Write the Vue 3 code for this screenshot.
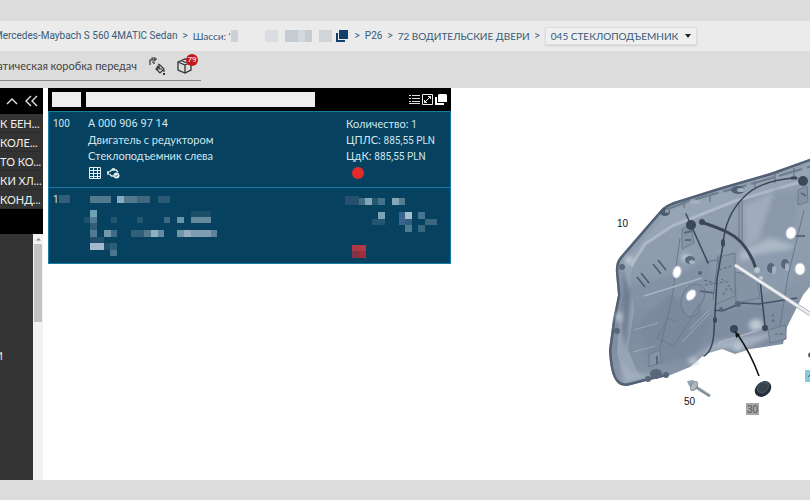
<script setup>
import { ref } from 'vue'

const groups = ['К БЕН...', 'КОЛЕ...', 'ТО КО...', 'КИ ХЛ...', 'КОНД...']
const group = ref('045')
const position = ref('')
const query = ref('')

// Masked values: [x, y, width, height, colour]
const chassisMask = [
  [0, 0, 7, 12, '#cdd1d6'], [34, 0, 13, 12, '#dcdde2'], [54, 0, 13, 12, '#c3cbd3'],
  [67, 0, 7, 12, '#d3d8dc'], [74, 0, 7, 12, '#c5cdd4'], [88, 0, 13, 12, '#d0d5d9']
]
const nameMask = [
  [6, 0, 21, 7, '#527a8f'], [33, 0, 7, 7, '#86adbd'], [40, 0, 13, 7, '#54798d'],
  [53, 0, 13, 7, '#3e687e'], [74, 0, 12, 7, '#2b5a74'],
  [6, 14, 7, 7, '#6ea1b1'], [6, 21, 7, 6, '#507b92'], [0, 21, 6, 6, '#1e506b'],
  [27, 21, 6, 6, '#25566f'], [53, 21, 6, 6, '#25566f'], [80, 21, 6, 6, '#3d6a82'],
  [93, 21, 7, 6, '#6b94a4'], [107, 21, 20, 6, '#648a9c'], [107, 15, 20, 6, '#1c4e69'],
  [6, 27, 7, 7, '#315f7a'], [6, 34, 7, 7, '#527b92'], [20, 34, 7, 7, '#7298aa'],
  [27, 34, 6, 7, '#3d6c84'], [47, 34, 13, 7, '#315f79'], [60, 34, 7, 7, '#52798e'],
  [67, 34, 7, 7, '#93b0bf'], [74, 34, 6, 7, '#638a9f'], [93, 34, 7, 7, '#7294a8'],
  [100, 34, 7, 7, '#94adc0'], [107, 34, 20, 7, '#7e9db2'], [127, 34, 6, 7, '#5e849a'],
  [6, 41, 14, 6, '#204f6e'], [6, 47, 14, 7, '#a3bacd'], [20, 47, 6, 7, '#1e506b'],
  [26, 47, 7, 7, '#2d5e77'], [26, 54, 7, 6, '#4b758a']
]
const priceMask = [
  [0, 0, 14, 9, '#244f6d'], [14, 2, 6, 7, '#416d83'], [20, 2, 7, 7, '#84a7b8'],
  [27, 2, 6, 7, '#25566f'], [33, 2, 7, 7, '#44728a'], [47, 2, 7, 7, '#84a7b8'],
  [54, 2, 6, 7, '#547c91'], [33, 16, 7, 7, '#7ba3b2'], [27, 23, 13, 6, '#235570'],
  [54, 16, 6, 13, '#386590'], [60, 16, 7, 7, '#a7bdcd'], [73, 16, 7, 7, '#46738d'],
  [80, 23, 12, 6, '#38677f'], [60, 23, 7, 6, '#315f7b'], [60, 29, 7, 7, '#4b7b90'],
  [73, 29, 7, 7, '#37667f'], [7, 49, 14, 6, '#ae3945'], [7, 55, 7, 7, '#803347'],
  [14, 55, 7, 7, '#a12d3b']
]
</script>

<template>
  <div class="page">
    <nav class="crumbs" aria-label="Навигация">
      <a href="#" class="model">Mercedes-Maybach S 560 4MATIC Sedan</a>
      <span class="sep">&gt;</span>
      <a href="#">Шасси: '</a>
      <svg class="chassis" width="101" height="12" aria-hidden="true">
        <rect v-for="(m, i) in chassisMask" :key="i" :x="m[0]" :y="m[1]" :width="m[2]" :height="m[3]" :fill="m[4]" />
      </svg>
      <button class="icon copy" type="button" aria-label="Копировать">
        <svg width="12" height="12" viewBox="0 0 12 12"><path d="M3 0h9v9H3z" fill="#123f6b" /><path d="M0 3h2v7h7v2H0z" fill="#123f6b" /></svg>
      </button>
      <span class="sep">&gt;</span>
      <a href="#" class="code">P26</a>
      <span class="sep">&gt;</span>
      <a href="#" class="section">72 ВОДИТЕЛЬСКИЕ ДВЕРИ</a>
      <span class="sep">&gt;</span>
      <label class="picker">
        <select v-model="group" aria-label="Подгруппа">
          <option value="045">045 СТЕКЛОПОДЪЕМНИК</option>
        </select>
        <svg width="6" height="4" viewBox="0 0 6 4" aria-hidden="true"><path d="M0 0h6L3 4z" fill="#222" /></svg>
      </label>
    </nav>

    <div class="toolbar">
      <div class="tools">
        <span class="gearbox">матическая коробка передач</span>
        <button class="icon" type="button" aria-label="Масла и краски">
          <svg width="18" height="18" viewBox="0 0 18 18" fill="none" stroke="#333" stroke-width="1.2">
            <path d="M2 8V3h5M4 3V1h3v3M7 2h2M4 5h2v2" />
            <path d="M8 12l4-4 4 4-4 4zM9 9l3 2M8 12h6M12 8l-2-1M16 13v2" /><path d="M15 17h2" stroke-width="2" />
          </svg>
        </button>
        <button class="icon cart" type="button" aria-label="Корзина">
          <svg width="16" height="17" viewBox="0 0 16 17" fill="none" stroke="#333" stroke-width="1.3">
            <path d="M1 5l7-3 6 3v8l-6 3-7-3zM1 5l7 3 6-3M8 8v8M4 3.500l7 3" />
          </svg>
          <span class="badge">79</span>
        </button>
      </div>
    </div>

    <main class="body">
      <aside class="side">
        <div class="side-head">
          <button class="icon" type="button" aria-label="Свернуть">
            <svg width="12" height="8" viewBox="0 0 12 8" fill="none" stroke="#e4e4e4" stroke-width="1.400"><path d="M1 7l5-5 5 5" /></svg>
          </button>
          <button class="icon" type="button" aria-label="Скрыть панель">
            <svg width="13" height="12" viewBox="0 0 13 12" fill="none" stroke="#e4e4e4" stroke-width="1.400"><path d="M6 1L1 6l5 5M12 1L7 6l5 5" /></svg>
          </button>
        </div>
        <ul class="groups">
          <li v-for="g in groups" :key="g"><a href="#">{{ g }}</a></li>
        </ul>
        <div class="side-gap"></div>
        <div class="tree">
          <div class="tree-list">
            <span v-for="n in 9" :key="n" class="tree-row">{{ n === 5 ? 'И' : '' }}</span>
          </div>
          <div class="scroll" aria-hidden="true">
            <svg width="9" height="10" viewBox="0 0 9 10"><path d="M2 6.500L4.500 4 7 6.500z" fill="#888" /></svg>
            <div class="thumb"></div>
          </div>
        </div>
      </aside>

      <section class="parts">
        <div class="parts-head">
          <input v-model="position" class="find-pos" type="text" aria-label="Позиция" />
          <input v-model="query" class="find-name" type="text" aria-label="Поиск детали" />
          <div class="actions">
            <button class="icon" type="button" aria-label="Список">
              <svg width="11" height="11" viewBox="0 0 11 11" stroke="#ddd"><path d="M0 1.500h2M3 1.500h8M0 4.500h2M3 4.500h8M0 7.500h2M3 7.500h8M0 9.500h11" /></svg>
            </button>
            <button class="icon" type="button" aria-label="Развернуть">
              <svg width="11" height="11" viewBox="0 0 11 11" fill="none" stroke="#eee"><path d="M.5.5h10v10H.5zM2.500 8.500l6-6M6 2.500h2.500V5M2.500 6v2.500H5" /></svg>
            </button>
            <button class="icon" type="button" aria-label="Копировать список">
              <svg width="12" height="11" viewBox="0 0 12 11" fill="#fff"><path d="M4 0h7l1 1v7H3V1z" /><path d="M0 3h2v6h7v2H0z" /></svg>
            </button>
          </div>
        </div>

        <article class="part">
          <span class="pos">100</span>
          <div class="info">
            <span class="num">A 000 906 97 14</span>
            <span>Двигатель с редуктором</span>
            <span>Стеклоподъемник слева</span>
            <div class="part-icons">
              <button class="icon" type="button" aria-label="Таблица">
                <svg width="12" height="12" viewBox="0 0 12 12" fill="none" stroke="#e4f0f5"><path d="M.5.5h11v11H.5zM.5 3.500h11M.5 6.500h11M.5 9.500h11M4.500 0v12M8.500 0v12" /></svg>
              </button>
              <button class="icon" type="button" aria-label="Двигатель">
                <svg width="13" height="11" viewBox="0 0 13 11" fill="none" stroke="#e4f0f5"><path d="M0 4.500h2M1 3v4M2.500 6l2 2H8M2.500 4l2-2H9l2 2M5 1h3" stroke-width="1.300" /><circle cx="9.500" cy="7.500" r="3" fill="#e4f0f5" stroke="none" /><path d="M8 7.500l1 1 2-2" stroke="#17587a" /></svg>
              </button>
            </div>
          </div>
          <div class="price">
            <span>Количество: <b>1</b></span>
            <span>ЦПЛС: <b>885,55 PLN</b></span>
            <span>ЦдК: <b>885,55 PLN</b></span>
            <i class="status"></i>
          </div>
        </article>

        <article class="part">
          <span class="pos">1<i class="pos-mask"></i></span>
          <div class="info masked">
            <svg width="133" height="60" aria-hidden="true">
              <rect v-for="(m, i) in nameMask" :key="i" :x="m[0]" :y="m[1]" :width="m[2]" :height="m[3]" :fill="m[4]" />
            </svg>
          </div>
          <div class="price masked">
            <svg width="92" height="62" aria-hidden="true">
              <rect v-for="(m, i) in priceMask" :key="i" :x="m[0]" :y="m[1]" :width="m[2]" :height="m[3]" :fill="m[4]" />
            </svg>
          </div>
        </article>
      </section>

      <section class="drawing">
        <svg width="210" height="392" viewBox="600 88 210 392" role="img" aria-label="Схема двери">
          <defs>
            <linearGradient id="panel" x1="0" y1="0" x2="0" y2="1">
              <stop offset="0" stop-color="#94a1b1" /><stop offset=".5" stop-color="#8d9bac" />
              <stop offset=".75" stop-color="#7e8c9f" /><stop offset="1" stop-color="#8896a8" />
            </linearGradient>
            <filter id="soft" x="-30%" y="-30%" width="160%" height="160%"><feGaussianBlur stdDeviation="2" /></filter>
            <clipPath id="door">
              <path d="M812 158L770 173 718 188 683 199Q664 204 659 212L645 228 620 257Q615 263 616 273L618 295 613 320 609 350Q610 373 616 381 621 388 631 385L650 380 668 376 690 367 705 354 722 349 735 354 750 349 783 344 787 327 796 309 803 295 812 284z" />
            </clipPath>
          </defs>
          <g clip-path="url(#door)">
            <path d="M600 150h212v240H600z" fill="url(#panel)" />
            <path d="M812 166L718 194 670 210 624 262 626 295 619 325 617 355 625 376 640 378 628 350 634 310 630 275 640 250 670 228 735 200 812 176z" fill="#97a4b4" />
            <path d="M631 266L645 244 672 226 735 201 800 182" fill="none" stroke="#adb9c6" stroke-width="3" />
            <g filter="url(#soft)">
              <path d="M744 207l40-20-20 47-18 14z" fill="#a0acbb" />
              <path d="M775 190l25 4-10 44-30-4z" fill="#8a98aa" />
              <path d="M740 252l30-14 26 8-16 7-40 8z" fill="#abb7c4" />
              <path d="M628 288l60-18 22-14 4 28-70 22z" fill="#8492a5" />
              <path d="M640 320l30-26 30 16 14 8-20 38-45 10z" fill="#7b899d" />
              <path d="M718 312l66-10-2 28-62 20z" fill="#808ea1" />
              <path d="M686 362l32-21 64-10-36 17-30 2z" fill="#a5b1bf" />
              <path d="M620 360l12 12 22 4-30 8z" fill="#a2afbd" />
              <path d="M752 255l40-6v36l-36 10z" fill="#8d9baf" />
              <path d="M623 270l8 25-5 55-4-20z" fill="#6e7c90" />
            </g>
            <path d="M812 158L770 173 718 188 683 199Q664 204 659 212L645 228 620 257Q615 263 616 273L618 295 613 320 609 350Q610 373 616 381 621 388 631 385L650 380 668 376" fill="none" stroke="#536176" stroke-width="5" />
            <path d="M684 200v8M710 196v6M755 181v8M775 174v9M794 168v10" stroke="#5b697d" />
            <path d="M668 209l18-7 24-7 45-12 57-17" fill="none" stroke="#6d7b8f" stroke-width="2" stroke-dasharray="24 5" />
            <ellipse cx="665" cy="212" rx="5" ry="4" fill="#4d5b70" /><ellipse cx="667" cy="211" rx="2" ry="2" fill="#909dad" />
            <ellipse cx="695" cy="202" rx="6" ry="2" fill="#a4b0bf" />
            <ellipse cx="738" cy="190" rx="7" ry="4" fill="#536177" /><ellipse cx="741" cy="190" rx="4" ry="2" fill="#a2afbe" />
          </g>

          <g fill="none" stroke="#69788c">
            <path d="M742 199v43M739 201v41M718 255l-5 45M706 262l16-3" />
            <path d="M680 238l-8 60-13 54M804 210l-16 66-8 50" />
            <path d="M682 297c2-10 13-16 20-11 6 4 2 14-3 22-2 9-9 12-14 5-4-5-5-10-3-16z" fill="#8290a3" />
            <path d="M668 318l-11 20 17 8 26-43M668 318l8 3" stroke="#6d7b90" />
            <path d="M714 310l8 1 20-8 17 1 38-6" stroke="#465469" stroke-width="1.500" />
            <path d="M700 291l14 2" stroke="#58677c" stroke-width="2" />
            <path d="M718 343l38-12M644 296l58-18" stroke="#a9b5c2" stroke-width="1.500" />
            <path d="M634 330l24-7M633 352l22-6M683 341l27-28M690 329l20-20" stroke="#9ca9b8" />
          </g>
          <g stroke="#4c596c" stroke-width="1.500">
            <path d="M637 277l8 10M641 273l8 10M653 264l8 10M658 260l8 10" />
          </g>
          <g fill="#8593a5" stroke="#6d7b8f">
            <path d="M719 257l16-4v43l-20 9z" />
            <path d="M735 272l22 4 3 22-24 5z" />
            <path d="M682 229l9-4 3 18-12 6z" /><path d="M798 190l9-4 1 16-10 3z" />
            <path d="M649 354l11-4 1 12-12 5z" />
            <path d="M768 330l18-5v14l-16 4z" />
          </g>
          <g fill="none" stroke="#5a687c">
            <path d="M719 270l12-4M705 285l20-3M723 295l6-10 4 8M721 279l8 4M772 321h4M773 314v9M775 334h8M704 280l14 4" stroke-dasharray="3 2" />
            <path d="M684 233l8-2M685 240h6M801 193l5 3M657 356v8M795 236h10" stroke-width="2" />
          </g>
          <g fill="#bcc7d3" filter="url(#soft)">
            <ellipse cx="619" cy="317" rx="3" ry="5" /><ellipse cx="629" cy="260" rx="4" ry="4" />
            <ellipse cx="686" cy="258" rx="5" ry="4" /><ellipse cx="756" cy="325" rx="7" ry="6" />
            <ellipse cx="693" cy="361" rx="5" ry="3" /><ellipse cx="738" cy="347" rx="5" ry="4" />
          </g>
          <g fill="#59677b">
            <ellipse cx="690" cy="260" rx="5" ry="4" /><ellipse cx="771" cy="268" rx="4" ry="5" /><ellipse cx="785" cy="264" rx="4" ry="5" />
            <ellipse cx="700" cy="273" rx="2" ry="2" /><circle cx="721" cy="309" r="2" /><circle cx="738" cy="304" r="3" />
            <circle cx="617" cy="331" r="3" /><circle cx="622" cy="267" r="3" /><ellipse cx="656" cy="374" rx="6" ry="5" /><circle cx="666" cy="375" r="3" /><circle cx="648" cy="379" r="3" />
          </g>
          <g fill="#a7b3c1"><ellipse cx="774" cy="270" rx="2" ry="4" /><ellipse cx="787" cy="267" rx="2" ry="4" /><ellipse cx="692" cy="262" rx="3" ry="2" /></g>
          <g fill="#fff" stroke="#c0c9d3">
            <ellipse cx="677" cy="272" rx="4" ry="6" transform="rotate(15 677 272)" />
            <ellipse cx="791" cy="233" rx="5" ry="6" transform="rotate(15 791 233)" />
            <ellipse cx="800" cy="269" rx="5" ry="6" />
            <ellipse cx="691" cy="295" rx="4" ry="6" transform="rotate(38 691 295)" />
          </g>

          <g fill="none" stroke="#3b4759" stroke-linecap="round">
            <path d="M701 222c20 7 34 11 44 25q8 11 11 22" stroke-width="3" />
            <path d="M794 178q-36 3-51 20-18 18-20 47l-6 34-3 52q-1 20-10 25" stroke-width="1.500" />
            <path d="M686 214l5 11 17 38M760 280l5 46" stroke-width="1.500" />
            <path d="M792 178h4" stroke-width="3" />
          </g>
          <g fill="#3b485a">
            <circle cx="691" cy="225" r="5" /><circle cx="702" cy="222" r="3" /><circle cx="803" cy="181" r="5" />
            <ellipse cx="723" cy="243" rx="2" ry="4" /><circle cx="765" cy="328" r="3" /><circle cx="734" cy="329" r="4" />
            <ellipse cx="715" cy="320" rx="2" ry="3" />
          </g>
          <circle cx="757" cy="270" r="3" fill="#b8c3ce" /><circle cx="761" cy="278" r="2" fill="#c5ced7" />
          <path d="M735 265l75 49" stroke="#aab1ba" stroke-width="4" />
          <path d="M735 265l75 49" stroke="#edf0f2" stroke-width="2.500" />
          <path d="M759 376q-8-22-21-41" fill="none" stroke="#111" stroke-width="1.500" /><path d="M735 331l1 7 4-3z" fill="#111" />

          <g transform="rotate(-40 763 389)"><ellipse cx="763" cy="389" rx="9" ry="7" fill="#242e3a" /><ellipse cx="764" cy="388" rx="7" ry="5" fill="#46525f" /><ellipse cx="764" cy="388" rx="5" ry="4" fill="#36414e" /></g>
          <path d="M696 387l14 9" stroke="#7c8790" stroke-width="3" /><path d="M696 386l14 9" stroke="#b3bbc0" />
          <path d="M687 381l6-1 5 5-4 4-5-3z" fill="#98a4ad" /><ellipse cx="694" cy="386" rx="3" ry="5" transform="rotate(30 694 386)" fill="#acb7be" stroke="#7c8994" />
          <ellipse cx="812" cy="355" rx="4" ry="3" fill="#536071" />

          <path d="M746 403h13v12h-13z" fill="#a6a6a6" /><path d="M805 370h5v12h-5z" fill="#88c9df" /><path d="M808 377l2-2" stroke="#35657a" />
          <g class="callout">
            <text x="617" y="227">10</text><text x="684" y="405">50</text><text x="747" y="413" fill="#555">30</text>
          </g>
        </svg>
      </section>
    </main>
    <footer class="foot"></footer>
  </div>
</template>

<style>
body { margin: 0; background: #dcdcdc; }
</style>

<style scoped>
.page {
  display: flex;
  flex-direction: column;
  box-sizing: border-box;
  min-height: 100vh;
  padding-top: 21px;
  overflow: hidden;
  background: #dcdcdc;
  font-family: Lato, "Noto Sans", sans-serif;
  font-size: 11px;
  line-height: 16px;
}
a { color: inherit; text-decoration: none; }
b { font-weight: 400; }
.icon {
  display: flex;
  flex: none;
  padding: 0;
  border: 0;
  background: none;
}
.crumbs {
  display: flex;
  align-items: center;
  height: 30px;
  background: #ebebeb;
  color: #375a78;
  font-size: 10px;
  white-space: nowrap;
}
.crumbs > * { flex: none; }
.model, .code, .sep { font-family: Roboto, sans-serif; }
.model { margin-left: -6px; }
.sep { padding: 0 5px; }
.copy { margin: 0 2px 0 4px; }
.picker {
  display: flex;
  align-items: center;
  padding: 0 5px;
  border: 1px solid #ddd;
  border-radius: 2px;
  background: #efefef;
  box-shadow: 0 1px 2px #ccc;
}
.picker select {
  appearance: none;
  padding: 0 6px 0 0;
  border: 0;
  background: none;
  color: inherit;
  font: inherit;
}
.toolbar { display: flex; height: 37px; }
.tools {
  display: flex;
  align-items: center;
  gap: 11px;
  box-sizing: border-box;
  width: 201px;
  height: 30px;
  border-bottom: 1px solid #888;
  color: #444;
}
.gearbox {
  display: flex;
  flex: none;
  justify-content: flex-end;
  width: 137px;
  white-space: nowrap;
}
.cart { position: relative; }
.badge {
  position: absolute;
  top: -3px;
  left: 9px;
  width: 12px;
  border-radius: 6px;
  background: #c4161c;
  color: #fff;
  font: 8px/12px Roboto, sans-serif;
}
.body { display: flex; flex: 1; background: #fff; }
.side { display: flex; flex-direction: column; width: 43px; background: #000; }
.side-head {
  display: flex;
  align-items: center;
  justify-content: flex-end;
  gap: 7px;
  height: 26px;
  padding-right: 5px;
}
.groups { margin: 0; padding: 0; list-style: none; background: #333; color: #eee; }
.groups li {
  height: 19px;
  border-bottom: 1px solid #2b2b2b;
  box-sizing: border-box;
  line-height: 19px;
  white-space: nowrap;
}
.side-gap { height: 25px; }
.tree { display: flex; flex: 1; background: #333; }
.tree-list { flex: 1; color: #ddd; }
.tree-row {
  display: flex;
  justify-content: flex-end;
  box-sizing: border-box;
  width: 3px;
  height: 26px;
  line-height: 36px;
}
.scroll {
  display: flex;
  flex-direction: column;
  align-items: center;
  width: 10px;
  background: #f2f2f2;
}
.thumb { width: 8px; height: 78px; background: #c3c3c3; }
.parts {
  align-self: flex-start;
  box-sizing: border-box;
  width: 403px;
  margin-left: 5px;
  border: 1px solid #147ca8;
  border-top: 0;
  background: #06415f;
  color: #cfe6f0;
}
.parts-head {
  display: flex;
  align-items: center;
  gap: 5px;
  height: 23px;
  margin: 0 -1px;
  padding: 0 4px;
  background: #000;
}
.parts-head input {
  box-sizing: border-box;
  height: 15px;
  min-width: 0;
  padding: 0 3px;
  border: 0;
  background: #eee;
}
.find-pos { width: 29px; }
.find-name { width: 229px; }
.actions { display: flex; gap: 2px; margin-left: auto; }
.part {
  display: grid;
  grid-template-columns: 35px 1fr 104px;
  box-sizing: border-box;
  height: 76px;
  padding: 4px 0 0 4px;
  border-top: 1px solid #1a7aa3;
}
.pos, .price b { font-family: Roboto, sans-serif; font-size: 10px; }
.num { font-family: Roboto, sans-serif; }
.info, .price { display: flex; flex-direction: column; white-space: nowrap; }
.info > span, .price > span { height: 16px; }
.part-icons { display: flex; align-items: center; gap: 6px; height: 18px; margin-left: 1px; }
.status {
  width: 12px;
  height: 12px;
  margin: 3px 0 0 6px;
  border-radius: 50%;
  background: #e32b2b;
}
.pos-mask {
  display: inline-block;
  width: 11px;
  height: 8px;
  background: #315f79;
}
.masked { padding-top: 4px; }
.info.masked svg { margin-left: -4px; }
.price.masked svg { margin-left: -1px; }
.drawing { display: flex; flex: 1; justify-content: flex-end; }
.drawing svg { flex: none; }
.callout { fill: #111; font: 10px "Liberation Sans", sans-serif; }
.foot { height: 20px; }
</style>
